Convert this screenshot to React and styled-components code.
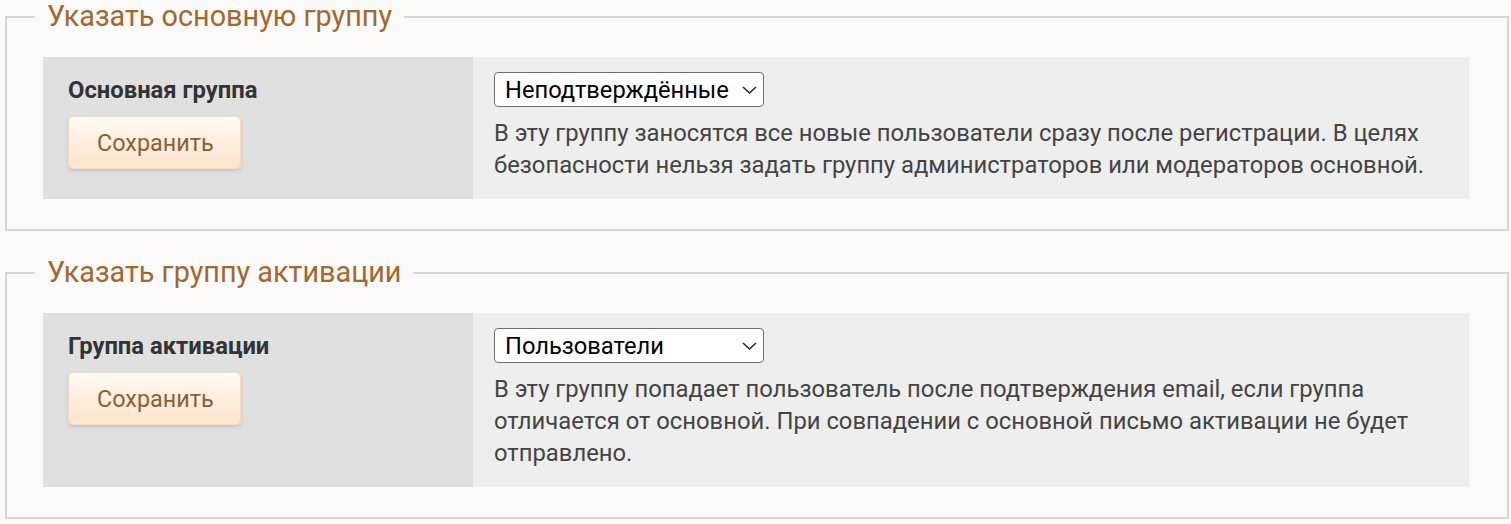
import React from "react";
import styled, { createGlobalStyle } from "styled-components";

const GlobalStyle = createGlobalStyle`
  html, body { margin: 0; padding: 0; background: #fbfaf9; }
  body { font-family: Roboto, "Noto Sans", Arial, sans-serif; }
`;

const Page = styled.div`
  padding: 0 2px 0 5px;
`;

const Fieldset = styled.fieldset`
  margin: 0 0 25px;
  padding: 24px 38px 30px 36px;
  border: 2px solid #d8d7d6;
  background: #fbfaf9;
  min-width: 0;
`;

const Legend = styled.legend`
  margin-left: -8px;
  padding: 0 12px;
  font-size: 28.8px;
  line-height: 33px;
  color: #a4672c;
  background: #fafafb;
`;

const Row = styled.div`
  display: grid;
  grid-template-columns: 430px 1fr;
`;

const LabelCell = styled.div`
  background: #dfe0df;
  padding: 19px 25px 28px;
  display: flex;
  flex-direction: column;
  align-items: flex-start;
  gap: 12px;
`;

const Label = styled.div`
  font-weight: 700;
  font-size: 23.8px;
  line-height: 28px;
  color: #333;
`;

const SaveButton = styled.button`
  font-family: Roboto, "Noto Sans", Arial, sans-serif;
  font-size: 23.4px;
  color: #8d5f33;
  height: 53px;
  padding: 0 26px 0 28px;
  border: 1px solid #f7dcc2;
  border-radius: 5px;
  background: linear-gradient(to bottom, #fff9f3, #fde4cc);
  box-shadow: 0 2px 4px rgba(0, 0, 0, 0.12);
  cursor: pointer;
`;

const ValueCell = styled.div`
  background: #eeeeee;
  padding: 15px 21px 18px;
`;

const SelectWrap = styled.div`
  position: relative;
  display: inline-block;
  vertical-align: top;
`;

const Select = styled.select`
  appearance: none;
  -webkit-appearance: none;
  font-family: Roboto, "Noto Sans", Arial, sans-serif;
  font-size: 23.7px;
  color: #000;
  background: #fff;
  border: 1px solid #707070;
  border-radius: 4px;
  height: 35px;
  padding: 0 34px 0 10px;
  display: block;
`;

const Chevron = styled.svg`
  position: absolute;
  right: 7px;
  top: 50%;
  margin-top: -4px;
  width: 15px;
  height: 8px;
  pointer-events: none;
`;

const Description = styled.p`
  margin: 10px 0 0;
  font-size: 23.8px;
  line-height: 32px;
  color: #444;
`;

const options = ["Неподтверждённые", "Пользователи", "Гости"];

function Section({ title, label, value, text }) {
  return (
    <Fieldset>
      <Legend>{title}</Legend>
      <Row>
        <LabelCell>
          <Label>{label}</Label>
          <SaveButton>Сохранить</SaveButton>
        </LabelCell>
        <ValueCell>
          <SelectWrap>
            <Select defaultValue={value}>
              {options.map((o) => (
                <option key={o} value={o}>{o}</option>
              ))}
            </Select>
            <Chevron viewBox="0 0 15 8">
              <path d="M1 1 L7.5 7 L14 1" fill="none" stroke="#222" strokeWidth="1.5" />
            </Chevron>
          </SelectWrap>
          <Description>{text}</Description>
        </ValueCell>
      </Row>
    </Fieldset>
  );
}

export default function App() {
  return (
    <Page>
      <GlobalStyle />
      <Section
        title="Указать основную группу"
        label="Основная группа"
        value="Неподтверждённые"
        text="В эту группу заносятся все новые пользователи сразу после регистрации. В целях безопасности нельзя задать группу администраторов или модераторов основной."
      />
      <Section
        title="Указать группу активации"
        label="Группа активации"
        value="Пользователи"
        text="В эту группу попадает пользователь после подтверждения email, если группа отличается от основной. При совпадении с основной письмо активации не будет отправлено."
      />
    </Page>
  );
}
